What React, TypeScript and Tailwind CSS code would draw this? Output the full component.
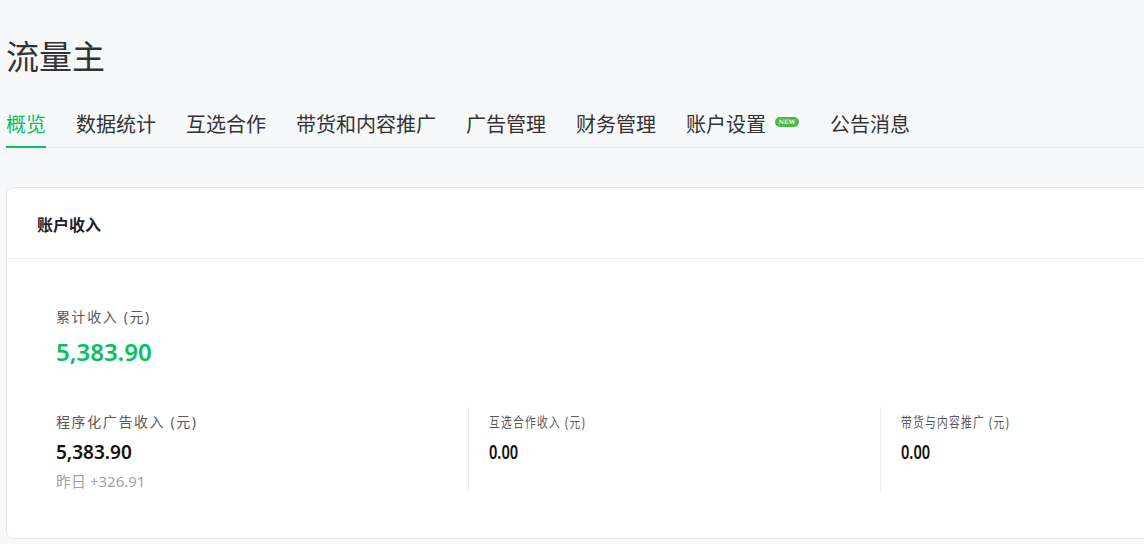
import React from "react";

const FONT = { fontFamily: '"Noto Sans", "Noto Sans CJK SC", sans-serif' };

const tabs = ["概览", "数据统计", "互选合作", "带货和内容推广", "广告管理", "财务管理", "账户设置", "公告消息"];

export default function App() {
  return (
    <div className="min-h-screen w-full overflow-hidden bg-[#f7f8fa] pl-[6px]" style={FONT}>
      <div className="w-[1400px]">
        <div className="pt-[33px] h-[81px] text-[33px] leading-[48px] text-[#333333]">流量主</div>
        <div className="mt-[19px] flex border-b border-[#e3e5e8] gap-[30px]">
          {tabs.map((t, i) => (
            <div
              key={t}
              className={
                "relative flex h-[47px] items-center pt-[2px] text-[20px] leading-[28px] " +
                (i === 0 ? "text-[#07c160]" : "text-[#333333]")
              }
            >
              {t}
              {i === 0 && <div className="absolute bottom-[-1px] left-0 right-0 h-[2px] bg-[#07c160]" />}
              {t === "账户设置" && (
                <span className="ml-[9px] mr-[1px] self-start mt-[15px] flex h-[10px] w-[24px] items-center justify-center rounded-full bg-[#4cb944] text-[6px] font-bold leading-none text-white" style={{ fontFamily: '"DejaVu Serif", serif' }}>
                  NEW
                </span>
              )}
            </div>
          ))}
        </div>
        <div className="mt-[39px] h-[352px] rounded-lg border border-[#e6e7ea] bg-white">
          <div className="flex h-[71px] items-center border-b border-[#eeeeee] px-[30px] pt-[3px] text-[16px] font-bold text-[#1d2129]">
            账户收入
          </div>
          <div className="pl-[49px] pt-[47px]">
            <div className="text-[14px] leading-[22px] tracking-[1.6px] text-[#595959]">累计收入 (元)</div>
            <div className="mt-[8px] text-[24px] font-semibold leading-[32px] text-[#07c160]">5,383.90</div>
            <div className="mt-[39px] flex">
              <div className="w-[412px] pt-[4px] pb-[1px]">
                <div className="text-[14px] leading-[22px] tracking-[1.6px] text-[#595959]">程序化广告收入 (元)</div>
                <div className="mt-[5px] text-[19px] font-semibold leading-[28px] text-[#111111]">5,383.90</div>
                <div className="mt-[4px] text-[15px] leading-[22px] text-[#a3a3a3]">昨日 +326.91</div>
              </div>
              <div className="w-[412px] border-l border-[#eeeeee] pl-[20px] pt-[4px]">
                <div className="origin-left scale-x-[0.77] whitespace-nowrap">
                  <div className="text-[14px] leading-[22px] tracking-[1.6px] text-[#595959]">互选合作收入 (元)</div>
                  <div className="mt-[5px] text-[19px] font-semibold leading-[28px] text-[#111111]">0.00</div>
                </div>
              </div>
              <div className="w-[412px] border-l border-[#eeeeee] pl-[20px] pt-[4px]">
                <div className="origin-left scale-x-[0.77] whitespace-nowrap">
                  <div className="text-[14px] leading-[22px] tracking-[1.6px] text-[#595959]">带货与内容推广 (元)</div>
                  <div className="mt-[5px] text-[19px] font-semibold leading-[28px] text-[#111111]">0.00</div>
                </div>
              </div>
            </div>
          </div>
        </div>
      </div>
    </div>
  );
}
